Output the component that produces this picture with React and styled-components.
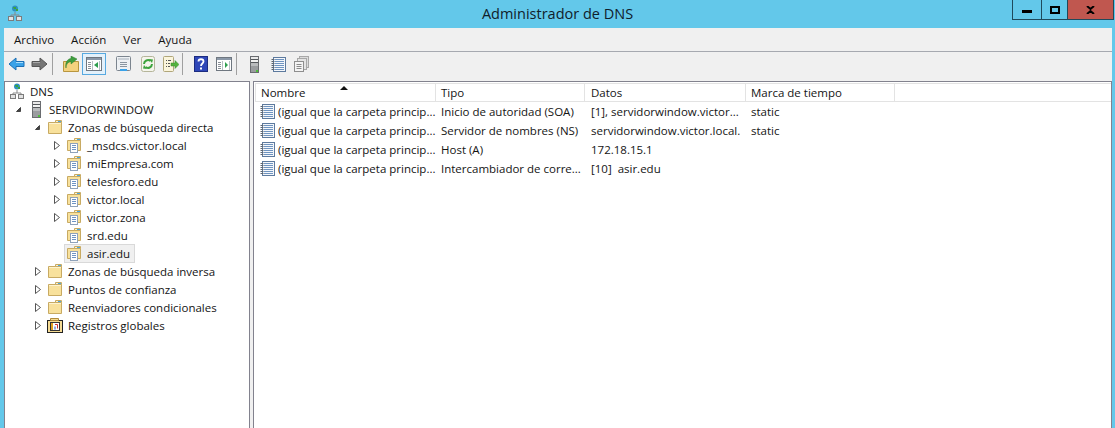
import { createGlobalStyle } from "styled-components"
import styled from "styled-components"

const Global = createGlobalStyle`
html, body { margin: 0; padding: 0; height: 100%; overflow: hidden; background: #63c8ea; }
#root { height: 100%; }
* { box-sizing: border-box; }
svg { flex: none; display: block; }
`

const Ventana = styled.div`
    width: 1115px;
    height: 428px;
    display: flex;
    flex-direction: column;
    background: #63c8ea;
    font-family: "Open Sans", "Noto Sans", sans-serif;
    font-size: 11.5px;
    color: #141414;
    overflow: hidden;
`

const BarraTitulo = styled.div`
    height: 28px;
    flex: none;
    display: grid;
    grid-template-columns: 1fr auto 1fr;
    align-items: start;
`

const IconoTitulo = styled.div`
    padding: 5px 0 0 8px;
    display: flex;
`

const Titulo = styled.div`
    font-size: 14.5px;
    line-height: 28px;
    color: #10202a;
`

const Controles = styled.div`
    display: flex;
    justify-self: end;
    height: 20px;
    margin-right: 1px;
    border: 1px solid #1f4a5c;
    border-top: none;
`

const Control = styled.div`
    width: ${props => props.$w}px;
    display: flex;
    align-items: center;
    justify-content: center;
    background: ${props => props.$cerrar ? "#c0574f" : "transparent"};
    border-left: ${props => props.$primero ? "none" : "1px solid #1f4a5c"};
`

const Cuerpo = styled.div`
    flex: 1;
    display: flex;
    flex-direction: column;
    margin: 0 3px 0 4px;
    background: #f0f0f0;
    min-height: 0;
`

const Menu = styled.div`
    height: 24px;
    flex: none;
    display: flex;
    align-items: center;
    padding-left: 10px;
    gap: 17px;
    border-bottom: 1px solid #a6a9b0;
`

const Herramientas = styled.div`
    height: 29px;
    flex: none;
    display: flex;
    align-items: flex-start;
    padding: 1px 0 0 1px;
`

const BotonH = styled.div`
    width: ${props => props.$w || 23}px;
    height: 22px;
    margin-left: ${props => props.$ml || 0}px;
    display: flex;
    align-items: center;
    justify-content: center;
    flex: none;
    border: 1px solid ${props => props.$activo ? "#57a9e0" : "transparent"};
    background: ${props => props.$activo ? "#e3f1fb" : "transparent"};
`

const Separador = styled.div`
    width: 1px;
    height: 22px;
    flex: none;
    margin-left: ${props => props.$ml || 0}px;
    background: #a0a0a0;
`

const Paneles = styled.div`
    flex: 1;
    display: flex;
    gap: 3px;
    min-height: 0;
`

const PanelArbol = styled.div`
    width: 246px;
    flex: none;
    background: #fff;
    border: 1px solid #82828e;
    border-bottom: none;
`

const Fila = styled.div`
    height: 18px;
    display: flex;
    align-items: center;
    padding-left: ${props => 4 + props.$nivel * 19}px;
`

const Expansor = styled.div`
    width: 19px;
    margin-left: -19px;
    flex: none;
    display: flex;
    justify-content: center;
`

const CajaIcono = styled.div`
    width: 16px;
    flex: none;
    display: flex;
    justify-content: center;
`

const Etiqueta = styled.div`
    margin-left: 5px;
    white-space: nowrap;
`

const Seleccion = styled.div`
    display: flex;
    align-items: center;
    height: 19px;
    margin-left: -2px;
    padding: 0 4px 0 1px;
    background: #f0f0f0;
    border: 1px solid #d9d9d9;
`

const PanelLista = styled.div`
    flex: 1;
    min-width: 0;
    background: #fff;
    border: 1px solid #82828e;
    border-bottom: none;
    padding-top: 1px;
`

const Cabecera = styled.div`
    height: 19px;
    display: flex;
    margin-left: 1px;
    border: 1px solid #e3e3e3;
    border-right: none;
    background: #fff;
`

const Columna = styled.div`
    width: ${props => props.$w}px;
    flex: none;
    padding-left: ${props => props.$pl}px;
    line-height: 17px;
    border-right: 1px solid #e3e3e3;
    white-space: nowrap;
    overflow: hidden;
    position: relative;
`

const Flecha = styled.div`
    position: absolute;
    left: 84px;
    top: 2px;
    width: 0;
    height: 0;
    border-left: 4px solid transparent;
    border-right: 4px solid transparent;
    border-bottom: 4px solid #111;
`

const Registro = styled.div`
    height: 19px;
    display: flex;
    align-items: center;
    margin-left: 1px;
`

const Celda = styled.div`
    width: ${props => props.$w}px;
    flex: none;
    display: flex;
    align-items: center;
    padding-left: ${props => props.$pl}px;
    white-space: pre;
    overflow: hidden;
`

const TextoNombre = styled.span`
    margin-left: 3px;
`

function IconoDns() {
    return (
        <svg width="14" height="16" viewBox="0 0 14 16">
            <path d="M7 .5a3 3 0 110 6 3 3 0 010-6z" fill="#2f8fbf" />
            <path d="M5 2h3v2H6zM8 4h2v2H8z" fill="#3aa63a" />
            <path d="M6.500 7h1v3h-1z" fill="#888" />
            <path d="M3 11.500V10h8v1.500" stroke="#8a8a8a" fill="none" />
            <rect x=".5" y="11.500" width="5" height="4" fill="#e2e2e2" stroke="#7c7c7c" />
            <rect x="8.500" y="11.500" width="5" height="4" fill="#e2e2e2" stroke="#7c7c7c" />
        </svg>
    )
}

function IconoServidor() {
    return (
        <svg width="9" height="17" viewBox="0 0 9 17">
            <rect x=".5" y=".5" width="8" height="16" fill="#b9bbbd" stroke="#6a6c70" />
            <rect x="1" y="1" width="7" height="2" fill="#e9e9e9" />
            <path d="M1 3.500h7M1 6.500h7" stroke="#55585c" />
            <rect x="1" y="4" width="7" height="2" fill="#f1f1f1" />
            <rect x="1" y="10" width="7" height="6" fill="#9a9c9f" />
            <rect x="6" y="14" width="2" height="2" fill="#4fbf3a" />
        </svg>
    )
}

function IconoCarpeta() {
    return (
        <svg width="16" height="14" viewBox="0 0 16 14">
            <path d="M1.500 2.500h13v11h-13z" fill="#f8e19c" stroke="#c8aa62" />
            <path d="M8.500 .5h6v2h-6z" fill="#fbf3d6" stroke="#c8aa62" />
            <rect x="11" y="1" width="3" height="1" fill="#4aa8e0" />
            <path d="M2 3.500h12" stroke="#fdf3cf" />
        </svg>
    )
}

function IconoZona() {
    return (
        <svg width="15" height="15" viewBox="0 0 15 15">
            <path d="M.5 2.500h13v10h-13z" fill="#f8e19c" stroke="#c8aa62" />
            <path d="M7.500 .5h6v2h-6z" fill="#fbf3d6" stroke="#c8aa62" />
            <rect x="10" y="1" width="3" height="1" fill="#4aa8e0" />
            <rect x="3.500" y="5.500" width="7" height="9" fill="#fff" stroke="#8fa2ba" />
            <path d="M5 7.500h4M5 9.500h4M5 11.500h4" stroke="#6d93c4" />
        </svg>
    )
}

function IconoGlobal() {
    return (
        <svg width="16" height="15" viewBox="0 0 16 15">
            <rect x=".5" y="2.500" width="15" height="12" fill="#f6dc94" stroke="#222" />
            <path d="M3.500 .5h8v2h-8z" fill="#f6dc94" stroke="#b08a3a" />
            <rect x="3.500" y="4.500" width="9" height="8" fill="#fff" stroke="#333" />
            <path d="M5 5v7" stroke="#e0a020" strokeWidth="2" />
            <path d="M8 6.500h2.500v4" stroke="#d03030" fill="none" />
            <path d="M8 8.500v3" stroke="#2050c0" />
        </svg>
    )
}

function IconoRegistro() {
    return (
        <svg width="15" height="15" viewBox="0 0 15 15">
            <rect x="2.500" y=".5" width="12" height="14" fill="#f4f7fb" stroke="#5d7a9e" />
            <path d="M4 2.500h9M4 4.500h9M4 6.500h9M4 8.500h9M4 10.500h9M4 12.500h9" stroke="#6f94c0" />
            <path d="M.5 2.500h3M.5 4.500h3M.5 6.500h3M.5 8.500h3M.5 10.500h3M.5 12.500h3" stroke="#5e6670" />
        </svg>
    )
}

function TrianguloAbierto() {
    return (
        <svg width="7" height="7" viewBox="0 0 7 7">
            <path d="M5.500 1.500v4h-4z" fill="#444" stroke="#444" />
        </svg>
    )
}

function TrianguloCerrado() {
    return (
        <svg width="6" height="9" viewBox="0 0 6 9">
            <path d="M.5.5l5 4-5 4z" fill="#fff" stroke="#555" />
        </svg>
    )
}

function FlechaAtras() {
    return (
        <svg width="17" height="14" viewBox="0 0 17 14">
            <path d="M1 7l7-6v3.500h8v5H8V13z" fill="#3aa2e8" stroke="#1c6fb5" />
            <path d="M8 5.500h7" stroke="#a8dcfa" />
        </svg>
    )
}

function FlechaAdelante() {
    return (
        <svg width="17" height="14" viewBox="0 0 17 14">
            <path d="M16 7L9 1v3.500H1v5h8V13z" fill="#767676" stroke="#555" />
            <path d="M2 5.500h7" stroke="#a8a8a8" />
        </svg>
    )
}

function IconoSubir() {
    return (
        <svg width="16" height="16" viewBox="0 0 16 16">
            <path d="M.5 5.500h15v10H.5z" fill="#f4d27e" stroke="#b8963f" />
            <path d="M3 12c0-4 2-6 5-6.500V8l6-5-6-3v2.500C4 3 2 7 3 12z" fill="#3f9e3f" stroke="#2b7a2b" strokeWidth=".5" />
        </svg>
    )
}

function IconoConsola({ flecha }) {
    return (
        <svg width="16" height="14" viewBox="0 0 16 14">
            <rect x=".5" y=".5" width="15" height="13" fill="#fff" stroke="#6f7780" />
            <rect x="1" y="1" width="14" height="2" fill="#8b98a8" />
            <path d="M2 5.500h3M2 7.500h3M2 9.500h3M2 11.500h3" stroke="#8a8f96" />
            <path d="M6.500 4v9" stroke="#b8bec4" />
            <path d={flecha === "izq" ? "M12 5v6L8 8z" : "M9 5v6l3-3z"} fill="#2e9e4e" />
            <path d="M13.500 4v9" stroke="#b8bec4" />
        </svg>
    )
}

function IconoHoja() {
    return (
        <svg width="15" height="16" viewBox="0 0 15 16">
            <rect x=".5" y=".5" width="14" height="14" rx="1" fill="#eef1f4" stroke="#7c858f" />
            <rect x="2" y="2" width="11" height="2" fill="#c9cfd6" />
            <path d="M4 6.500h7M4 8.500h7M4 10.500h7" stroke="#8a95a1" />
            <rect x="4" y="13" width="7" height="2" fill="#3aa2e8" />
        </svg>
    )
}

function IconoRefrescar() {
    return (
        <svg width="14" height="16" viewBox="0 0 14 16">
            <rect x=".5" y=".5" width="13" height="15" rx="2" fill="#f5f5ec" stroke="#b5b59a" />
            <path d="M3 8a4 4 0 016.500-3" fill="none" stroke="#3da33d" strokeWidth="2" />
            <path d="M11 8a4 4 0 01-6.500 3" fill="none" stroke="#3da33d" strokeWidth="2" />
            <path d="M8 3l4 .5-1 3.500zM6 13l-4-.5 1-3.500z" fill="#3da33d" />
        </svg>
    )
}

function IconoExportar() {
    return (
        <svg width="16" height="16" viewBox="0 0 16 16">
            <rect x=".5" y=".5" width="10" height="15" rx="1" fill="#fbf5dc" stroke="#b0a67a" />
            <path d="M3 4.500h1M5 4.500h3M3 7.500h1M5 7.500h2M3 10.500h1M5 10.500h2" stroke="#555" />
            <path d="M8 7h4V4.500l4 4-4 4V10H8z" fill="#54b33e" stroke="#3a8a2c" strokeWidth=".5" />
        </svg>
    )
}

function IconoAyuda() {
    return (
        <svg width="14" height="16" viewBox="0 0 14 16">
            <rect x=".5" y=".5" width="13" height="15" fill="#2f47b8" stroke="#1c2c80" />
            <path d="M4.500 5.500c0-3 5-3 5 0 0 2-2.500 2-2.500 4.500" fill="none" stroke="#fff" strokeWidth="1.800" />
            <rect x="6" y="11.500" width="2" height="2" fill="#fff" />
        </svg>
    )
}

function IconoCopias() {
    return (
        <svg width="15" height="16" viewBox="0 0 15 16">
            <rect x="5.500" y=".5" width="9" height="11" fill="#dcdcdc" stroke="#a8a8a8" />
            <rect x="3.500" y="2.500" width="9" height="11" fill="#e4e4e4" stroke="#a8a8a8" />
            <rect x=".5" y="5.500" width="9" height="10" fill="#f4f4f4" stroke="#8e8e8e" />
            <path d="M2.500 8.500h5M2.500 10.500h5M2.500 12.500h5" stroke="#8a8a8a" />
        </svg>
    )
}

const arbol = [
    { nivel: 0, icono: <IconoDns />, texto: "DNS" },
    { nivel: 1, icono: <IconoServidor />, texto: "SERVIDORWINDOW", exp: "abierto" },
    { nivel: 2, icono: <IconoCarpeta />, texto: "Zonas de búsqueda directa", exp: "abierto" },
    { nivel: 3, icono: <IconoZona />, texto: "_msdcs.victor.local", exp: "cerrado" },
    { nivel: 3, icono: <IconoZona />, texto: "miEmpresa.com", exp: "cerrado" },
    { nivel: 3, icono: <IconoZona />, texto: "telesforo.edu", exp: "cerrado" },
    { nivel: 3, icono: <IconoZona />, texto: "victor.local", exp: "cerrado" },
    { nivel: 3, icono: <IconoZona />, texto: "victor.zona", exp: "cerrado" },
    { nivel: 3, icono: <IconoZona />, texto: "srd.edu" },
    { nivel: 3, icono: <IconoZona />, texto: "asir.edu", sel: true },
    { nivel: 2, icono: <IconoCarpeta />, texto: "Zonas de búsqueda inversa", exp: "cerrado" },
    { nivel: 2, icono: <IconoCarpeta />, texto: "Puntos de confianza", exp: "cerrado" },
    { nivel: 2, icono: <IconoCarpeta />, texto: "Reenviadores condicionales", exp: "cerrado" },
    { nivel: 2, icono: <IconoGlobal />, texto: "Registros globales", exp: "cerrado" },
]

const registros = [
    ["Inicio de autoridad (SOA)", "[1], servidorwindow.victor...", "static"],
    ["Servidor de nombres (NS)", "servidorwindow.victor.local.", "static"],
    ["Host (A)", "172.18.15.1", ""],
    ["Intercambiador de corre...", "[10]  asir.edu", ""],
]

export default function App() {
    return (
        <Ventana>
            <Global />
            <BarraTitulo>
                <IconoTitulo><IconoDns /></IconoTitulo>
                <Titulo>Administrador de DNS</Titulo>
                <Controles>
                    <Control $w={28} $primero>
                        <svg width="10" height="7" viewBox="0 0 10 7"><rect y="4" width="10" height="3" fill="#000" /></svg>
                    </Control>
                    <Control $w={26}>
                        <svg width="10" height="8" viewBox="0 0 10 8"><rect x="1" y="1" width="8" height="6" fill="none" stroke="#000" strokeWidth="2" /></svg>
                    </Control>
                    <Control $w={46} $cerrar>
                        <svg width="9" height="8" viewBox="0 0 9 8"><path d="M1 0l3.500 3L8 0M1 8l3.500-3L8 8" fill="none" stroke="#000" strokeWidth="2" /></svg>
                    </Control>
                </Controles>
            </BarraTitulo>
            <Cuerpo>
                <Menu>
                    <span>Archivo</span>
                    <span>Acción</span>
                    <span>Ver</span>
                    <span>Ayuda</span>
                </Menu>
                <Herramientas>
                    <BotonH $w={23}><FlechaAtras /></BotonH>
                    <BotonH $w={23}><FlechaAdelante /></BotonH>
                    <Separador $ml={1} />
                    <BotonH $ml={6}><IconoSubir /></BotonH>
                    <BotonH $w={24} $activo><IconoConsola flecha="izq" /></BotonH>
                    <BotonH $ml={6}><IconoHoja /></BotonH>
                    <BotonH $ml={1}><IconoRefrescar /></BotonH>
                    <BotonH><IconoExportar /></BotonH>
                    <Separador />
                    <BotonH $ml={6}><IconoAyuda /></BotonH>
                    <BotonH $w={24}><IconoConsola flecha="der" /></BotonH>
                    <Separador />
                    <BotonH $ml={6}><IconoServidor /></BotonH>
                    <BotonH $ml={1}><IconoRegistro /></BotonH>
                    <BotonH><IconoCopias /></BotonH>
                </Herramientas>
                <Paneles>
                    <PanelArbol>
                        {arbol.map((n) => (
                            <Fila key={n.texto} $nivel={n.nivel}>
                                {n.exp && (
                                    <Expansor>
                                        {n.exp === "abierto" ? <TrianguloAbierto /> : <TrianguloCerrado />}
                                    </Expansor>
                                )}
                                {n.sel ? (
                                    <Seleccion>
                                        <CajaIcono>{n.icono}</CajaIcono>
                                        <Etiqueta>{n.texto}</Etiqueta>
                                    </Seleccion>
                                ) : (
                                    <>
                                        <CajaIcono>{n.icono}</CajaIcono>
                                        <Etiqueta>{n.texto}</Etiqueta>
                                    </>
                                )}
                            </Fila>
                        ))}
                    </PanelArbol>
                    <PanelLista>
                        <Cabecera>
                            <Columna $w={180} $pl={5}>Nombre<Flecha /></Columna>
                            <Columna $w={149} $pl={5}>Tipo</Columna>
                            <Columna $w={161} $pl={6}>Datos</Columna>
                            <Columna $w={149} $pl={5}>Marca de tiempo</Columna>
                        </Cabecera>
                        {registros.map((r, i) => (
                            <Registro key={i}>
                                <Celda $w={181} $pl={5}>
                                    <IconoRegistro />
                                    <TextoNombre>(igual que la carpeta princip...</TextoNombre>
                                </Celda>
                                <Celda $w={149} $pl={5}>{r[0]}</Celda>
                                <Celda $w={161} $pl={6}>{r[1]}</Celda>
                                <Celda $w={149} $pl={5}>{r[2]}</Celda>
                            </Registro>
                        ))}
                    </PanelLista>
                </Paneles>
            </Cuerpo>
        </Ventana>
    )
}
